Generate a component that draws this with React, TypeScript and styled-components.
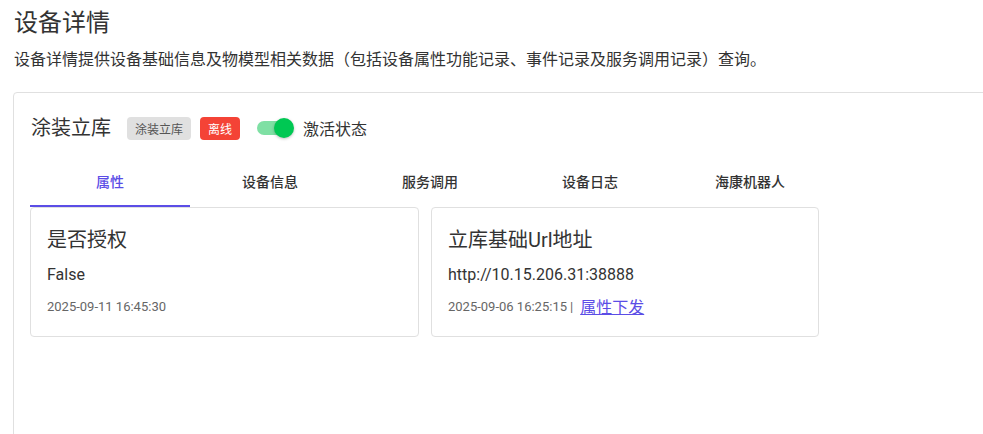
import React from 'react';
import styled, { createGlobalStyle } from 'styled-components';

const GlobalStyle = createGlobalStyle`
  html, body {
    margin: 0;
    padding: 0;
    background: #fff;
    overflow: hidden;
  }
  body {
    font-family: Roboto, 'Noto Sans CJK SC', sans-serif;
    color: #333;
  }
`;

type Tab = { label: string };

const tabs: Tab[] = [
  { label: '属性' },
  { label: '设备信息' },
  { label: '服务调用' },
  { label: '设备日志' },
  { label: '海康机器人' },
];

type Prop = {
  name: string;
  value: string;
  time: string;
  writable?: boolean;
};

const props: Prop[] = [
  { name: '是否授权', value: 'False', time: '2025-09-11 16:45:30' },
  { name: '立库基础Url地址', value: 'http://10.15.206.31:38888', time: '2025-09-06 16:25:15', writable: true },
];

const App = () => {
  return (
    <>
      <GlobalStyle />
      <Page>
        <PageTitle>设备详情</PageTitle>
        <PageDesc>
          设备详情提供设备基础信息及物模型相关数据（包括设备属性功能记录、事件记录及服务调用记录）查询。
        </PageDesc>
        <Panel>
          <HeaderRow>
            <DeviceName>涂装立库</DeviceName>
            <Tag>涂装立库</Tag>
            <Tag tone='danger'>离线</Tag>
            <SwitchWrap>
              <Switch aria-checked='true' role='switch'>
                <Track />
                <Thumb />
              </Switch>
              <SwitchLabel>激活状态</SwitchLabel>
            </SwitchWrap>
          </HeaderRow>
          <TabBar>
            {tabs.map((t, i) => (
              <TabItem key={t.label} active={i === 0}>
                {t.label}
              </TabItem>
            ))}
          </TabBar>
          <CardGrid>
            {props.map((p) => (
              <Card key={p.name}>
                <CardTitle>{p.name}</CardTitle>
                <CardValue>{p.value}</CardValue>
                <CardFooter>
                  <Time>{p.time}</Time>
                  {p.writable && (
                    <>
                      <Sep>|</Sep>
                      <ActionLink href='#'>属性下发</ActionLink>
                    </>
                  )}
                </CardFooter>
              </Card>
            ))}
          </CardGrid>
        </Panel>
      </Page>
    </>
  );
};

export default App;

const Page = styled.div`
  padding: 4px 0 0 13px;
  width: 1000px;
`;

const PageTitle = styled.h1`
  margin: 0 0 0 1px;
  font-size: 24px;
  font-weight: 400;
  line-height: 38px;
  color: #333;
`;

const PageDesc = styled.p`
  margin: 7px 0 0 1px;
  font-size: 16px;
  line-height: 22px;
  color: #333;
`;

const Panel = styled.div`
  margin-top: 21px;
  min-height: 360px;
  padding: 23px 16px 0;
  border: 1px solid #e0e0e0;
  border-radius: 4px;
`;

const HeaderRow = styled.div`
  display: flex;
  align-items: center;
  height: 24px;
`;

const DeviceName = styled.h2`
  margin: 0 16px 0 1px;
  font-size: 20px;
  font-weight: 400;
  line-height: 24px;
  color: #333;
`;

const Tag = styled.span<{ tone?: 'danger' }>`
  display: inline-flex;
  align-items: center;
  height: 23px;
  padding: 0 8px;
  margin-right: 9px;
  border-radius: 4px;
  font-size: 12px;
  background: ${(p) => (p.tone === 'danger' ? '#f44336' : '#e0e0e0')};
  color: ${(p) => (p.tone === 'danger' ? '#fff' : '#555')};
`;

const SwitchWrap = styled.label`
  display: flex;
  align-items: center;
  margin-left: 8px;
  gap: 9px;
`;

const Switch = styled.span`
  position: relative;
  width: 37px;
  height: 20px;
  display: inline-block;
`;

const Track = styled.span`
  position: absolute;
  left: 0;
  top: 3px;
  width: 34px;
  height: 14px;
  border-radius: 7px;
  background: #7fe0a4;
`;

const Thumb = styled.span`
  position: absolute;
  right: 0;
  top: 0;
  width: 20px;
  height: 20px;
  border-radius: 50%;
  background: #00c853;
  box-shadow: 0 1px 3px rgba(0, 0, 0, 0.25);
`;

const SwitchLabel = styled.span`
  font-size: 16px;
  color: #333;
`;

const TabBar = styled.div`
  display: flex;
  margin-top: 18px;
  height: 49px;
`;

const TabItem = styled.div<{ active?: boolean }>`
  width: 160px;
  display: flex;
  align-items: center;
  justify-content: center;
  box-sizing: border-box;
  padding-bottom: 2px;
  font-size: 14px;
  font-weight: 500;
  color: ${(p) => (p.active ? '#5b4de6' : '#333')};
  border-bottom: 2px solid ${(p) => (p.active ? '#5b4de6' : 'transparent')};
`;

const CardGrid = styled.div`
  display: grid;
  grid-template-columns: 389px 388px;
  gap: 12px;
`;

const Card = styled.div`
  display: flex;
  flex-direction: column;
  padding: 16px 16px 18px;
  border: 1px solid #e0e0e0;
  border-radius: 4px;
`;

const CardTitle = styled.div`
  font-size: 20px;
  font-weight: 400;
  line-height: 32px;
  color: #333;
`;

const CardValue = styled.div`
  margin-top: 7px;
  font-size: 16px;
  line-height: 24px;
  color: #333;
`;

const CardFooter = styled.div`
  display: flex;
  align-items: center;
  height: 24px;
  margin-top: 7px;
`;

const Time = styled.span`
  font-size: 13px;
  color: #666;
`;

const Sep = styled.span`
  margin: 0 7px 0 3px;
  font-size: 13px;
  color: #666;
`;

const ActionLink = styled.a`
  font-size: 16px;
  color: #5b4de6;
  text-decoration: underline;
`;
